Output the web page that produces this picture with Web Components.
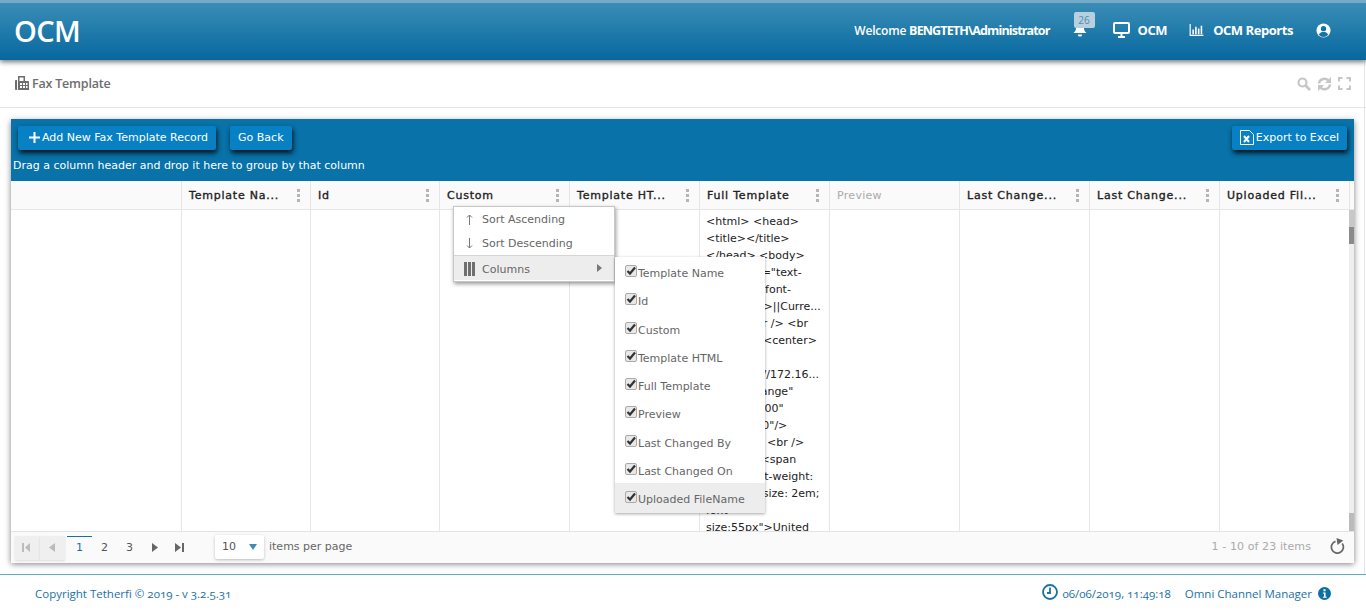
<!DOCTYPE html>
<html><head><meta charset="utf-8"><style>
html,body{margin:0;padding:0;height:613px;overflow:hidden;background:#fff;font-family:"DejaVu Sans",sans-serif}
</style></head><body>
<ocm-app></ocm-app>
<script>
function el(name,html){customElements.define(name,class extends HTMLElement{constructor(){super();this.attachShadow({mode:'open'}).innerHTML=html;}});}
el('ocm-header',`<style>
:host{display:flex;align-items:center;height:57px;border-top:3px solid #76abc8;background:linear-gradient(#3a8db5,#06689f);box-shadow:0 2px 5px rgba(0,0,0,.55);color:#fff;font-family:"Open Sans",sans-serif;position:relative;z-index:2}
.logo{font-size:29px;font-weight:600;margin-left:14px;letter-spacing:-.6px;line-height:57px;margin-top:-3px}
.r{margin-left:auto;display:flex;align-items:center;font-size:13px;font-weight:700;letter-spacing:-.45px;margin-top:-3px}
.w{font-size:12px;font-weight:600;letter-spacing:-.2px;margin-right:23px}.w b{font-weight:700;font-size:12.500px;letter-spacing:-.85px}
.bell{position:relative;width:22px;height:30px;margin-right:18px}
.badge{position:absolute;left:1px;top:-3px;width:21px;height:16px;background:#b8d0dd;border-radius:2px;color:#4d8db3;font-size:10px;line-height:16px;text-align:center;font-weight:400;letter-spacing:0}
.bell svg{position:absolute;left:0;top:8px}
.i{display:flex;align-items:center}
svg{display:block}
</style><div class="logo">OCM</div><div class="r"><span class="w">Welcome <b>BENGTETH\\Administrator</b></span>
<span class="bell"><svg width="14" height="14" viewBox="0 0 16 16" fill="#fff"><path d="M8 0c-3 0-4.500 2-4.500 5 0 4-2 5-3 6.500h15c-1-1.500-3-2.500-3-6.500C12.500 2 11 0 8 0zM5.500 13a2.500 2.500 0 0 0 5 0z"/></svg><span class="badge">26</span></span>
<span class="i" style="margin-right:8px"><svg width="17" height="16" viewBox="0 0 17 16" fill="none"><rect x="1" y="1" width="15" height="10" rx="1" stroke="#fff" stroke-width="2"/><path d="M5 15h7M8.500 12v3" stroke="#fff" stroke-width="2"/></svg></span><span style="margin-right:22px">OCM</span>
<span class="i" style="margin-right:9px"><svg width="15" height="12" viewBox="0 0 15 13" fill="#fff"><path d="M0 0h1.300v11.700H15V13H0zM3 6h1.700v5H3zM6 3h1.700v8H6zM9 5h1.700v6H9zM12 2h1.700v9H12z"/></svg></span><span style="margin-right:23px">OCM Reports</span>
<span class="i" style="margin-right:35px"><svg width="15" height="15" viewBox="0 0 16 16"><circle cx="8" cy="8" r="7.500" fill="#fff"/><circle cx="8" cy="6" r="2.800" fill="#1273a6"/><path d="M3 12.500c1-2.500 3-3 5-3s4 .5 5 3a6.500 6.500 0 0 1-10 0z" fill="#1273a6"/></svg></span>
</div>`);
el('ocm-title',`<style>
:host{display:flex;align-items:center;height:47px;border-bottom:1px solid #e5e5e5;color:#6e6e6e;font-family:"Open Sans",sans-serif;font-size:12.500px;font-weight:600;padding:0 0 0 15px;letter-spacing:-.2px}
.t{margin-left:3px}.tools{margin-left:auto;display:flex;gap:6px;margin-right:15px;align-items:center}
</style><svg width="14" height="15" viewBox="0 0 14 15" fill="#6e6e6e"><path fill-rule="evenodd" d="M0 5a1 1 0 0 1 1-1h1v10H1a1 1 0 0 1-1-1zM3 0h7v5h3a1 1 0 0 1 1 1v8H3zM4.500 1.500V5h4V1.500zM5 7v2h2V7zm3 0v2h2V7zM5 10v2h2v-2zm3 0v2h2v-2zm3-3v2h1.500V7zm0 3v2h1.500v-2z"/></svg><span class="t">Fax Template</span>
<span class="tools"><svg width="14" height="14" viewBox="0 0 14 14" fill="none" stroke="#c6c6c6"><circle cx="5.500" cy="5.500" r="4" stroke-width="2.200"/><path d="M8.500 8.500l4.500 4.500" stroke-width="2.600"/></svg>
<svg width="15" height="14" viewBox="0 0 15 14" fill="none" stroke="#c6c6c6" stroke-width="2.400"><path d="M2 6.500A5.500 5 0 0 1 12 4"/><path d="M13 7.500A5.500 5 0 0 1 3 10"/><path d="M14 0v6H8zM1 14V8h6z" fill="#c6c6c6" stroke="none"/></svg>
<svg width="13" height="13" viewBox="0 0 13 13" fill="none" stroke="#c6c6c6" stroke-width="2"><path d="M1 4.500V1h3.500M8.500 1H12v3.500M12 8.500V12H8.500M4.500 12H1V8.500"/></svg></span>`);
el('tool-btn',`<style>
:host{display:inline-flex;align-items:center;height:24px;box-sizing:border-box;background:#0781c4;color:#fff;border-radius:2px;font-size:11px;padding:0 8px 2px;box-shadow:1px 3px 5px rgba(0,0,0,.85);white-space:nowrap;font-family:"DejaVu Sans",sans-serif}
</style><slot name="i"></slot><slot></slot>`);
el('grid-head',`<style>
:host{display:flex;align-items:center;box-sizing:border-box;height:28px;padding:0 10px 0 7px;border-right:1px solid #e6e6e6;font-size:11px;font-weight:400;-webkit-text-stroke:.35px #222;color:#222;letter-spacing:.78px;white-space:nowrap;overflow:hidden}
:host([plain]){color:#aaa;-webkit-text-stroke:0;letter-spacing:.3px}
.d{margin-left:auto;width:3px;height:13px;background:radial-gradient(circle at 1.500px 1.500px,#b5b5b5 1.500px,transparent 1.600px) 0 0/3px 5px repeat-y;flex:none}
:host([plain]) .d,:host([blank]) .d{display:none}
</style><slot></slot><span class="d"></span>`);
el('grid-menu',`<style>
:host{position:absolute;left:442px;top:87px;z-index:5;width:162px;height:76px;background:#fff;border:1px solid #c7c7c7;box-sizing:border-box;box-shadow:1px 2px 4px rgba(0,0,0,.4);font-size:11px;color:#666;font-family:"DejaVu Sans",sans-serif}
.a{display:flex;align-items:center;height:24px;padding-left:10px}.a span{margin-left:7px}
.ic{width:11px;display:flex;justify-content:center}
.c{background:#ededed;border-top:1px solid #d5d5d5;height:25px;position:relative;padding-top:2px;box-sizing:border-box}
.arrow{position:absolute;right:12px;top:8px;border-left:5px solid #777;border-top:4px solid transparent;border-bottom:4px solid transparent}
</style><div class="a"><span class="ic" style="margin:0"><svg width="7" height="11" viewBox="0 0 7 11" fill="none" stroke="#777"><path d="M3.500 11V1M1 3.500L3.500 1 6 3.500"/></svg></span><span>Sort Ascending</span></div>
<div class="a"><span class="ic" style="margin:0"><svg width="7" height="11" viewBox="0 0 7 11" fill="none" stroke="#777"><path d="M3.500 0v10M1 7.500L3.500 10 6 7.500"/></svg></span><span>Sort Descending</span></div>
<div class="a c"><span class="ic" style="margin:0"><svg width="11" height="14" viewBox="0 0 11 14" fill="#6f6f6f"><path d="M0 0h3v14H0zM4 0h3v14H4zM8 0h3v14H8z"/></svg></span><span>Columns</span><i class="arrow"></i></div>`);
el('col-item',`<style>
:host{display:flex;align-items:flex-start;height:28.250px;box-sizing:border-box;padding:0 0 0 10px;font-size:11px;line-height:14px;color:#666}
:host([hot]){background:#ededed;height:29.750px}
.b{width:12px;height:12px;box-sizing:border-box;border:1px solid #aaa;border-radius:2px;background:#e8e8e8;margin:8px 1px 0 0;display:flex;flex:none}
.tx{padding-top:10px}
</style><span class="b"><svg width="10" height="10" viewBox="0 0 10 10" fill="none" stroke="#333" stroke-width="2.200"><path d="M1.500 5l2.500 2.500L9 1.500"/></svg></span><span class="tx"><slot></slot></span>`);
el('col-menu',`<style>
:host{position:absolute;left:604px;top:138px;z-index:6;width:150px;height:256px;background:#fff;box-shadow:0 1px 3px rgba(0,0,0,.35);display:block;box-sizing:border-box;font-family:"DejaVu Sans",sans-serif}
</style><slot></slot>`);
el('ocm-pager',`<style>
:host{position:relative;z-index:7;display:flex;align-items:center;height:32px;box-sizing:border-box;background:#fafafa;border-top:1px solid #e3e3e3;font-size:11px;color:#666;padding-left:4px}
.n{width:25px;height:24px;display:flex;align-items:center;justify-content:center;color:#555;box-sizing:border-box;padding-bottom:1px}
.g{background:#efefef;box-shadow:0 1px 2px rgba(0,0,0,.12);padding-right:2px}
.on{color:#1b6f9e;border-top:1px solid #1b6f9e}
.sz{width:49px;height:24px;margin-left:23px;margin-top:-2px;background:#fff;box-shadow:0 1px 3px rgba(0,0,0,.25);border-radius:2px;display:flex;align-items:center;padding-left:7px;box-sizing:border-box;position:relative;color:#555}
.sz i{position:absolute;right:7px;top:9px;border-top:6px solid #3f8bb5;border-left:4px solid transparent;border-right:4px solid transparent}
.t{margin-left:5px;padding-bottom:2px}.c{margin-left:auto;color:#aaa;margin-right:19px;letter-spacing:.1px;padding-bottom:3px}
.rf{margin:0 9px 3px 0}
</style>
<span class="n g"><svg width="9" height="9" viewBox="0 0 9 9" fill="#bbb"><path d="M0 0h2v9H0zM8 0v9L3 4.500z"/></svg></span>
<span class="n g"><svg width="6" height="9" viewBox="0 0 6 9" fill="#bbb"><path d="M6 0v9L0 4.500z"/></svg></span>
<span class="n on" style="margin-left:2px">1</span><span class="n">2</span><span class="n">3</span>
<span class="n"><svg width="6" height="9" viewBox="0 0 6 9" fill="#666"><path d="M0 0v9l6-4.500z"/></svg></span>
<span class="n"><svg width="9" height="9" viewBox="0 0 9 9" fill="#666"><path d="M0 0v9l6-4.500zM7 0h2v9H7z"/></svg></span>
<span class="sz">10<i></i></span><span class="t">items per page</span><span class="c">1 - 10 of 23 items</span>
<svg class="rf" width="15" height="16" viewBox="0 0 15 16" fill="none" stroke="#666" stroke-width="1.700"><path d="M12.200 5.500A6 6 0 1 1 5.500 3.400"/><path d="M6.500 0l6.800 2.600L7.500 7z" fill="#666" stroke="none"/></svg>`);
el('ocm-grid',`<style>
:host{display:block;position:absolute;left:11px;top:119px;width:1343px;height:443px;box-shadow:0 2px 6px rgba(0,0,0,.5);background:#fff}
.tb{background:#0872a9;height:62px;box-sizing:border-box;padding:7px 7px 0;position:relative;color:#fff;font-size:11px}
.btns{display:flex;gap:14px}.ex{margin-left:auto}
.drag{position:absolute;left:2px;top:40px}
.hd{display:grid;grid-template-columns:var(--cols);background:#fafafa;border-bottom:1px solid #e6e6e6;height:29px;box-sizing:border-box}
.body{display:grid;grid-template-columns:var(--cols);height:321px;overflow:hidden;position:relative}
.body>div{border-right:1px solid #e6e6e6;box-sizing:border-box}
.ft{font-size:11px;line-height:17px;color:#222;padding:3px 0 0 6px;overflow:hidden;white-space:nowrap}
.sb{position:absolute;right:0;top:0;bottom:0;width:5px;background:#eee}
.sb i{position:absolute;left:0;width:5px}
</style>
<div class="tb"><div class="btns"><tool-btn style="padding-left:11px"><svg slot="i" width="11" height="11" viewBox="0 0 11 11" fill="#fff" style="margin-right:2px"><path d="M4.500 0h2v4.500H11v2H6.500V11h-2V6.500H0v-2h4.500z"/></svg>Add New Fax Template Record</tool-btn><tool-btn>Go Back</tool-btn>
<tool-btn class="ex"><svg slot="i" width="14" height="15" viewBox="0 0 14 15" fill="none" stroke="#fff" style="margin-right:2px"><path d="M.5.500h9l4 4v10H.5z"/><path d="M4 6l5 6M9 6l-5 6" stroke-width="2"/></svg>Export to Excel</tool-btn></div>
<div class="drag">Drag a column header and drop it here to group by that column</div></div>
<div class="hd"><grid-head blank></grid-head><grid-head>Template Na...</grid-head><grid-head>Id</grid-head><grid-head>Custom</grid-head><grid-head>Template HT...</grid-head><grid-head>Full Template</grid-head><grid-head plain>Preview</grid-head><grid-head>Last Change...</grid-head><grid-head>Last Change...</grid-head><grid-head>Uploaded Fil...</grid-head><span></span></div>
<div class="body"><div></div><div></div><div></div><div></div><div></div><div class="ft">&lt;html&gt; &lt;head&gt;<br>&lt;title&gt;&lt;/title&gt;<br>&lt;/head&gt; &lt;body&gt;<br>&lt;div style="text-<br>align: left; font-<br>size:12px"&gt;||Curre...<br>&lt;br /&gt; &lt;br /&gt; &lt;br<br>/&gt; &lt;br /&gt; &lt;center&gt;<br>&lt;img<br>src="http://172.16...<br>alt="Exchange"<br>width="1000"<br>height="50"/&gt;<br>&lt;/center&gt; &lt;br /&gt;<br>&lt;br /&gt;&nbsp;&nbsp;&nbsp;&nbsp; &lt;span<br>style="font-weight:<br>bold; font-size: 2em;<br>font-<br>size:55px"&gt;United</div><div></div><div></div><div></div><div></div><span></span><span class="sb"><i style="top:0;height:17px;background:#c8c8c8"></i><i style="top:17px;height:17px;background:#8a8a8a"></i><i style="top:303px;height:18px;background:#bbb"></i></span></div>
<ocm-pager></ocm-pager>
<grid-menu></grid-menu>
<col-menu><col-item>Template Name</col-item><col-item>Id</col-item><col-item>Custom</col-item><col-item>Template HTML</col-item><col-item>Full Template</col-item><col-item>Preview</col-item><col-item>Last Changed By</col-item><col-item>Last Changed On</col-item><col-item hot>Uploaded FileName</col-item></col-menu>`);
el('ocm-footer',`<style>
:host{position:absolute;left:0;right:0;top:574px;height:39px;border-top:1px solid #61a9cc;display:flex;align-items:center;font-family:"Open Sans",sans-serif;font-variant-numeric:oldstyle-nums;font-size:11.500px;color:#1a72a3;padding:0 35px 1px 35px;box-sizing:border-box;background:#fff}
.r{margin-left:auto;display:flex;align-items:center}
</style><span>Copyright Tetherfi © 2019 - v 3.2.5.31</span><span class="r"><svg width="16" height="16" viewBox="0 0 16 16" fill="none" stroke="#1a72a3" stroke-width="1.800" style="margin:-3px 5px 0 0"><circle cx="8" cy="8" r="7"/><path d="M8 3.500V9H5"/></svg><span>06/06/2019, 11:49:18</span><span style="margin-left:14px">Omni Channel Manager</span><svg width="13" height="13" viewBox="0 0 12 12" style="margin-left:6px"><circle cx="6" cy="6" r="6" fill="#0b6ea5"/><path d="M5 2h2v2H5zM4.500 5H7v4h1v1H4.500V9h1V6h-1z" fill="#fff"/></svg></span>`);
el('ocm-app',`<style>
:host{display:block;position:relative;height:613px;width:1366px;overflow:hidden;--cols:171px 129px 129px 130px 130px 130px 130px 130px 130px 130px 4px}
.rl{position:absolute;right:1px;top:60px;height:514px;width:1px;background:#e5e5e5}
</style><ocm-header></ocm-header><ocm-title></ocm-title><span class="rl"></span><ocm-grid></ocm-grid><ocm-footer></ocm-footer>`);
</script></body></html>
